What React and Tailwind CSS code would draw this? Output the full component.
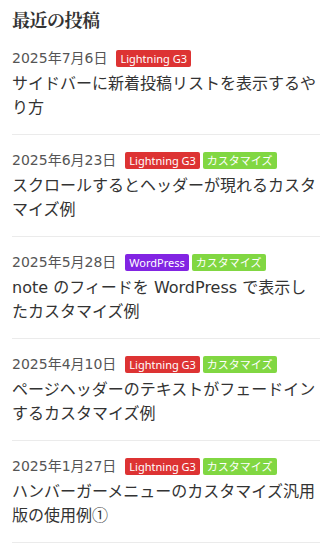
const posts = [
  { date: '2025年7月6日', tags: ['lightning'], title: 'サイドバーに新着投稿リストを表示するやり方' },
  { date: '2025年6月23日', tags: ['lightning', 'custom'], title: 'スクロールするとヘッダーが現れるカスタマイズ例' },
  { date: '2025年5月28日', tags: ['wp', 'custom'], title: 'note のフィードを WordPress で表示したカスタマイズ例' },
  { date: '2025年4月10日', tags: ['lightning', 'custom'], title: 'ページヘッダーのテキストがフェードインするカスタマイズ例' },
  { date: '2025年1月27日', tags: ['lightning', 'custom'], title: 'ハンバーガーメニューのカスタマイズ汎用版の使用例', mark: '①' },
]

const TAGS = {
  lightning: { label: 'Lightning G3', className: 'bg-[#dd3333]' },
  custom: { label: 'カスタマイズ', className: 'bg-[#81d742]' },
  wp: { label: 'WordPress', className: 'bg-[#8224e3]' },
}

export default function App() {
  return (
    <div
      className="bg-white min-h-[550px] px-3 pt-[7px]"
      style={{ fontFamily: '"DejaVu Sans", "Noto Sans CJK JP", sans-serif' }}
    >
      {/* Heading */}
      <h2
        className="text-[18px] leading-[24px] font-bold text-[#333] tracking-[-0.5px] mb-[2px]"
        style={{ fontFamily: '"Noto Serif CJK JP", "Liberation Serif", "Noto Sans CJK JP", serif' }}
      >
        最近の投稿
      </h2>

      <ul>
        {posts.map((p, i) => (
          <li key={i} className="border-b border-[#ebebeb] pt-[15px] pb-[14px] w-[308px]">
            <div className="flex items-center h-[20px]">
              <span className="text-[14px] leading-[20px] text-[#555] mr-[9px]">{p.date}</span>
              <div className="flex gap-[3px]" style={{ fontFamily: '"Noto Sans", "Noto Sans CJK JP", sans-serif' }}>
                {p.tags.map(t => (
                  <span
                    key={t}
                    className={`${TAGS[t].className} text-white text-[11px] leading-[17px] px-[4px] rounded-[2px]`}
                  >
                    {TAGS[t].label}
                  </span>
                ))}
              </div>
            </div>
            <p className="mt-[4px] text-[16px] leading-[24px] text-[#333]">
              {p.title}
              {p.mark && <span className="leading-[16px]" style={{ fontFamily: '"Noto Sans CJK JP", sans-serif' }}>{p.mark}</span>}
            </p>
          </li>
        ))}
      </ul>
    </div>
  )
}
